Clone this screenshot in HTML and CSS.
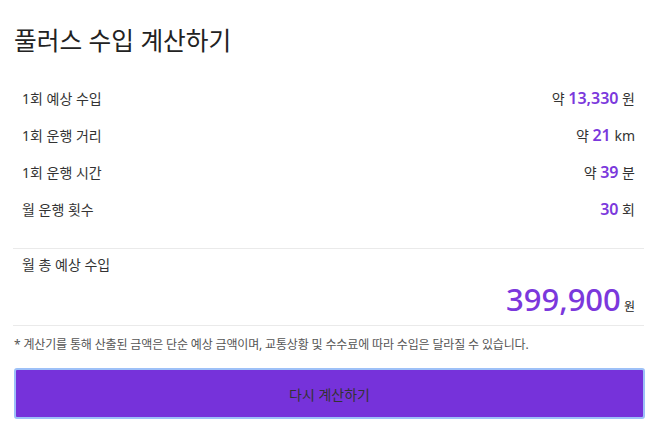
FILE: index.html
```html
<!DOCTYPE html>
<html lang="ko">

<head>
    <meta charset="UTF-8">
    <meta name="viewport" content="width=device-width, initial-scale=1.0">
    <title>풀러스 수입 계산하기</title>
    <link rel="stylesheet" href="styles.css">
</head>

<body>

    <div class="calculator">
        <h1 class="title">풀러스 수입 계산하기</h1>

        <ul class="result-list">
            <li class="result-row">
                <span class="label">1회 예상 수입</span>
                <span class="value">약 <strong>13,330</strong> 원</span>
            </li>
            <li class="result-row">
                <span class="label">1회 운행 거리</span>
                <span class="value">약 <strong>21</strong> km</span>
            </li>
            <li class="result-row">
                <span class="label">1회 운행 시간</span>
                <span class="value">약 <strong>39</strong> 분</span>
            </li>
            <li class="result-row">
                <span class="label">월 운행 횟수</span>
                <span class="value"><strong>30</strong> 회</span>
            </li>
        </ul>

        <div class="total">
            <div class="label">월 총 예상 수입</div>
            <div class="total-value"><strong>399,900</strong> 원</div>
        </div>

        <p class="notice">* 계산기를 통해 산출된 금액은 단순 예상 금액이며, 교통상황 및 수수료에 따라 수입은 달라질 수 있습니다.</p>

        <button class="retry-button">다시 계산하기</button>
    </div>

</body>

</html>
```

FILE: styles.css
```css
body {
    font-family: 'Noto Sans', 'Noto Sans CJK KR', sans-serif;
    background-color: #ffffff;
    color: #222;
    margin: 0;
}

.calculator {
    padding: 24px 13px 0 13px;
}

.title {
    font-size: 24.7px;
    font-weight: 400;
    line-height: 34px;
    margin: 0 0 0 1px;
    color: #222;
}

.result-list {
    list-style-type: none;
    padding: 0 9px;
    margin: 21px 0 0 0;
}

.result-row {
    display: flex;
    justify-content: space-between;
    align-items: center;
    height: 37px;
    font-size: 14px;
    color: #333;
}

.value strong {
    color: #7b38dc;
    font-size: 16px;
    font-weight: 600;
}

.total {
    margin-top: 21px;
    border-top: 1px solid #eaeaea;
    border-bottom: 1px solid #eaeaea;
    padding: 6px 9px 2px 9px;
}

.total .label {
    font-size: 14px;
    color: #333;
    line-height: 20px;
}

.total-value {
    text-align: right;
    font-size: 12px;
    line-height: 32px;
    margin-top: 8px;
}

.total-value strong {
    color: #7b38dc;
    font-size: 31px;
    font-weight: 500;
}

.notice {
    font-size: 12px;
    letter-spacing: -0.15px;
    color: #555;
    margin: 10px 0 0 1px;
    line-height: 18px;
}

.retry-button {
    display: block;
    width: 100%;
    height: 51px;
    margin-top: 14px;
    margin-left: 1px;
    font-family: inherit;
    font-size: 14px;
    color: #333;
    background-color: #7632da;
    border: 2px solid #9dc0f8;
    border-radius: 3px;
    cursor: pointer;
}
```
